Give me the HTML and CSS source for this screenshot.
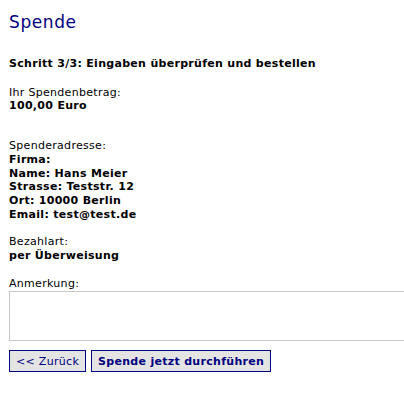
FILE: index.html
```html
<!DOCTYPE html>
<html lang="de">
<head>
<meta charset="utf-8">
<title>Spende</title>
<link rel="stylesheet" href="styles.css">
</head>
<body>
<div class="page">
  <h1 class="title">Spende</h1>
  <p class="step">Schritt 3/3: Eingaben überprüfen und bestellen</p>
  <div class="block block-amount">
    <div>Ihr Spendenbetrag:</div>
    <div class="val">100,00 Euro</div>
  </div>
  <div class="block">
    <div>Spenderadresse:</div>
    <div class="val">Firma:</div>
    <div class="val">Name: Hans Meier</div>
    <div class="val">Strasse: Teststr. 12</div>
    <div class="val">Ort: 10000 Berlin</div>
    <div class="val">Email: test@test.de</div>
  </div>
  <div class="block">
    <div>Bezahlart:</div>
    <div class="val">per Überweisung</div>
  </div>
  <div class="note">
    <label class="note-label" for="note">Anmerkung:</label>
    <textarea id="note" class="note-input"></textarea>
  </div>
  <div class="actions">
    <button class="btn" type="button">&lt;&lt; Zurück</button>
    <button class="btn btn-primary" type="submit">Spende jetzt durchführen</button>
  </div>
</div>
</body>
</html>
```
FILE: styles.css
```css
html, body {
  margin: 0;
  padding: 0;
  background: #fff;
}
body {
  font-family: "DejaVu Sans", Verdana, sans-serif;
  font-size: 11px;
  line-height: 13.7px;
  letter-spacing: 0.3px;
  color: #000;
}
.page {
  padding: 12px 0 0 9px;
}
.title {
  margin: 0 0 25px;
  font-size: 17px;
  line-height: 20px;
  font-weight: normal;
  letter-spacing: 0.6px;
  color: #000080;
}
.step {
  margin: 0 0 15px;
  font-weight: bold;
}
.block {
  margin: 0 0 14px;
}
.block-amount {
  margin-bottom: 26px;
}
.val {
  font-weight: bold;
}
.note {
  display: flex;
  flex-direction: column;
  gap: 1px;
  margin-top: 2px;
}
.note-label {
  display: block;
}
.note-input {
  box-sizing: border-box;
  width: 395px;
  height: 50px;
  margin: 0;
  border: 1px solid #c8c8c8;
  border-right: none;
  resize: none;
  font-family: "DejaVu Sans", Verdana, sans-serif;
  font-size: 11px;
}
.actions {
  display: flex;
  gap: 5px;
  margin-top: 9px;
}
.btn {
  box-sizing: border-box;
  height: 22px;
  padding: 0 6px;
  margin: 0;
  border: 1px solid #000080;
  background: #e4e4e4;
  color: #000080;
  font-family: "DejaVu Sans", Verdana, sans-serif;
  font-size: 11px;
  letter-spacing: 0.3px;
}
.btn-primary {
  font-weight: bold;
}
```
